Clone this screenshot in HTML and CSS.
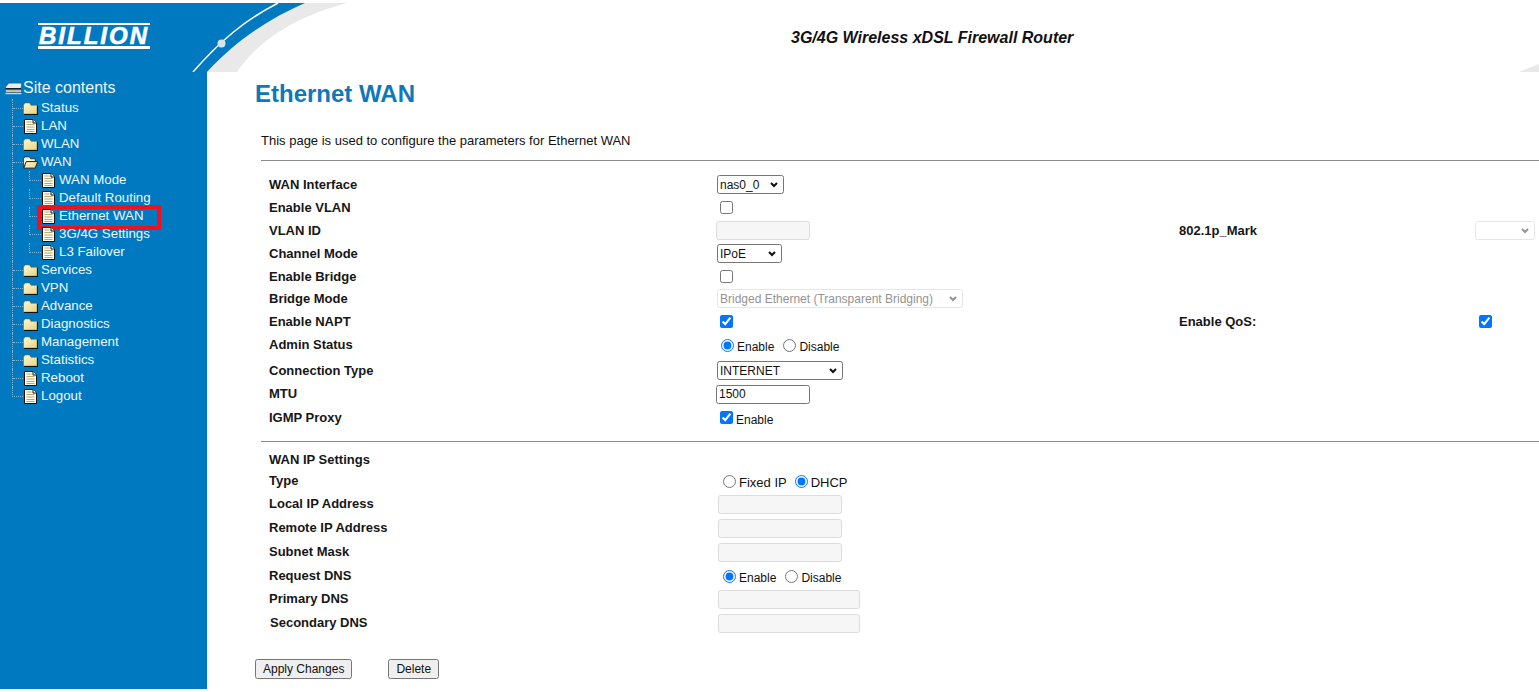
FILE: index.html
```html
<!DOCTYPE html>
<html lang="en">
<head>
<meta charset="utf-8">
<title>Ethernet WAN</title>
<link rel="stylesheet" href="styles.css">
</head>
<body>
<svg width="0" height="0" class="defs">
  <defs>
    <linearGradient id="fg" x1="0" y1="0" x2="1" y2="1"><stop offset="0" stop-color="#fff9d6"/><stop offset="1" stop-color="#e8d27e"/></linearGradient>
    <symbol id="folder" viewBox="0 0 16 14">
      <path d="M.5 3.500 2 1h5l1.500 2.500H15V13H.5z" fill="url(#fg)" stroke="#6f6230" stroke-width=".6"/>
      <path d="M1 13.300h14.700V4" fill="none" stroke="#111" stroke-width="1.100"/>
    </symbol>
    <symbol id="open" viewBox="0 0 16 14">
      <path d="M.5 3 2 1h5l1 2h5v3H4L.5 12.500z" fill="#fff9d6" stroke="#222" stroke-width=".8"/>
      <path d="M3.500 6H15.700L13 13H.8z" fill="url(#fg)" stroke="#111" stroke-width=".9"/>
    </symbol>
    <symbol id="doc" viewBox="0 0 13 15">
      <path d="M.5.500h8.500l3.500 3.500v10.500H.5z" fill="#fdfbe8" stroke="#111" stroke-width="1"/>
      <path d="M9 .5V4h3.500" fill="#fff" stroke="#111" stroke-width="1"/>
      <path d="M2.500 3h5M2.500 5.500h8M2.500 8h8M2.500 10.500h8M2.500 12.500h8" stroke="#b5a97c" stroke-width="1"/>
    </symbol>
    <symbol id="root" viewBox="0 0 18 13">
      <path d="M.5 5 4 .8h13.500v4.500L16 6.500H.5z" fill="#e6ecf0" stroke="#3a4a55" stroke-width=".7"/>
      <path d="M.5 6.700h16.500" stroke="#111c28" stroke-width="1.400"/>
      <path d="M.5 7.800h17v3H.5z" fill="#c3cace" stroke="#3a4a55" stroke-width=".6"/>
      <path d="M7 8.500h4v1.500H7z" fill="#e0b85a"/>
      <path d="M.5 12h17" stroke="#f4f8fa" stroke-width="1"/>
    </symbol>
  </defs>
</svg>
<div class="page">
  <header class="top">
    <div class="brand">
      <svg class="curve" viewBox="0 0 350 69" width="350" height="69" aria-hidden="true">
        <path d="M0 0H348C300 12 260 35 237 69H0z" fill="#e9e9e9"/>
        <path d="M0 0H305C270 15 235 38 207 69H0z" fill="#0079c1"/>
        <path d="M193 69C220 38 245 17 278 0" fill="none" stroke="#fff" stroke-width="1.500"/>
        <circle cx="221.500" cy="40.500" r="4" fill="#d6e2ee"/>
      </svg>
      <div class="logo">BILLION</div>
    </div>
    <div class="product">3G/4G Wireless xDSL Firewall Router</div>
    <svg class="corner" viewBox="0 0 20 9" width="20" height="9" aria-hidden="true"><path d="M0 9 20 1V9z" fill="#e9e9e9"/></svg>
  </header>
  <div class="body">
    <nav class="side">
      <div class="root"><svg class="ico-root"><use href="#root"/></svg>Site contents</div>
      <ul class="tree">
        <li><svg class="ico"><use href="#folder"/></svg>Status</li>
        <li><svg class="ico"><use href="#doc"/></svg>LAN</li>
        <li><svg class="ico"><use href="#folder"/></svg>WLAN</li>
        <li><svg class="ico"><use href="#open"/></svg>WAN</li>
        <li class="sub"><svg class="ico"><use href="#doc"/></svg>WAN Mode</li>
        <li class="sub"><svg class="ico"><use href="#doc"/></svg>Default Routing</li>
        <li class="sub marked"><svg class="ico"><use href="#doc"/></svg>Ethernet WAN</li>
        <li class="sub"><svg class="ico"><use href="#doc"/></svg>3G/4G Settings</li>
        <li class="sub"><svg class="ico"><use href="#doc"/></svg>L3 Failover</li>
        <li><svg class="ico"><use href="#folder"/></svg>Services</li>
        <li><svg class="ico"><use href="#folder"/></svg>VPN</li>
        <li><svg class="ico"><use href="#folder"/></svg>Advance</li>
        <li><svg class="ico"><use href="#folder"/></svg>Diagnostics</li>
        <li><svg class="ico"><use href="#folder"/></svg>Management</li>
        <li><svg class="ico"><use href="#folder"/></svg>Statistics</li>
        <li><svg class="ico"><use href="#doc"/></svg>Reboot</li>
        <li class="last"><svg class="ico"><use href="#doc"/></svg>Logout</li>
      </ul>
    </nav>
    <main class="main">
      <h1>Ethernet WAN</h1>
      <p class="intro">This page is used to configure the parameters for Ethernet WAN</p>
      <hr class="rule first">
      <div class="form upper">
        <div class="lab">WAN Interface</div>
        <div class="val wide"><select class="s-nas"><option>nas0_0</option></select></div>

        <div class="lab">Enable VLAN</div>
        <div class="val wide"><input type="checkbox" class="cb"></div>

        <div class="lab">VLAN ID</div>
        <div class="val"><input type="text" class="t-short" disabled></div>
        <div class="lab">802.1p_Mark</div>
        <div class="val"><select class="s-mark" disabled><option></option></select></div>

        <div class="lab">Channel Mode</div>
        <div class="val wide"><select class="s-ipoe"><option>IPoE</option></select></div>

        <div class="lab low">Enable Bridge</div>
        <div class="val wide"><input type="checkbox" class="cb"></div>

        <div class="lab">Bridge Mode</div>
        <div class="val wide"><select class="s-bridge" disabled><option>Bridged Ethernet (Transparent Bridging)</option></select></div>

        <div class="lab">Enable NAPT</div>
        <div class="val"><input type="checkbox" class="cb" checked></div>
        <div class="lab">Enable QoS:</div>
        <div class="val"><input type="checkbox" class="cb cb-qos" checked></div>

        <div class="lab high">Admin Status</div>
        <div class="val wide opts admin"><label><input type="radio" name="admin" checked>Enable</label><label><input type="radio" name="admin">Disable</label></div>

        <div class="lab">Connection Type</div>
        <div class="val wide"><select class="s-conn"><option>INTERNET</option></select></div>

        <div class="lab">MTU</div>
        <div class="val wide"><input type="text" class="t-short" value="1500"></div>

        <div class="lab">IGMP Proxy</div>
        <div class="val wide opts igmp"><label class="tight"><input type="checkbox" checked>Enable</label></div>
      </div>
      <hr class="rule second">
      <div class="form lower">
        <div class="lab">WAN IP Settings</div>
        <div class="val"></div>

        <div class="lab">Type</div>
        <div class="val opts big"><label><input type="radio" name="ip">Fixed IP</label><label><input type="radio" name="ip" checked>DHCP</label></div>

        <div class="lab">Local IP Address</div>
        <div class="val ind"><input type="text" class="t-mid" disabled></div>

        <div class="lab">Remote IP Address</div>
        <div class="val ind"><input type="text" class="t-mid" disabled></div>

        <div class="lab">Subnet Mask</div>
        <div class="val ind"><input type="text" class="t-mid" disabled></div>

        <div class="lab">Request DNS</div>
        <div class="val opts dns"><label><input type="radio" name="dns" checked>Enable</label><label><input type="radio" name="dns">Disable</label></div>

        <div class="lab">Primary DNS</div>
        <div class="val ind"><input type="text" class="t-long" disabled></div>

        <div class="lab nudge">Secondary DNS</div>
        <div class="val ind"><input type="text" class="t-long" disabled></div>
      </div>
      <div class="actions">
        <button type="button">Apply Changes</button>
        <button type="button">Delete</button>
      </div>
    </main>
  </div>
</div>
</body>
</html>
```
FILE: styles.css
```css
*, *::before, *::after { box-sizing: border-box; }
html, body { margin: 0; padding: 0; height: 100%; background: #fff; overflow: hidden; }
body { font-family: "Liberation Sans", Arial, sans-serif; color: #111; font-size: 12px; }
.defs { position: absolute; }
.page { padding-top: 3px; height: 689px; display: flex; flex-direction: column; }

.top { height: 69px; display: flex; position: relative; flex: none; }
.brand { width: 350px; flex: none; position: relative; }
.curve { position: absolute; left: 0; top: 0; }
.logo {
  position: absolute; left: 38px; top: 20px; width: 112px; height: 26px;
  border-top: 2px solid #fff; border-bottom: 3px solid #fff;
  color: #fff; font: italic bold 24px/21px "Liberation Sans", sans-serif;
  -webkit-text-stroke: .6px #fff;
  letter-spacing: 2px; text-align: center; white-space: nowrap;
}
.product {
  position: absolute; left: 791px; top: 26px;
  font: italic bold 16px/18px "Liberation Sans", sans-serif; color: #111; white-space: nowrap;
}
.corner { position: absolute; right: 0; bottom: 0; }

.body { display: flex; flex: 1; min-height: 0; }
.side { width: 207px; flex: none; background: #0079c1; color: #eef8ff; padding: 6px 0 0 5px; }
.root { display: flex; align-items: center; height: 20px; font-size: 16px; line-height: 20px; }
.ico-root { width: 17px; height: 13px; margin-right: 1px; }
.tree { list-style: none; margin: 1px 0 0 7px; padding: 0; width: fit-content; }
.tree li {
  height: 18px; display: flex; align-items: center; font-size: 13.300px; line-height: 18px;
  white-space: nowrap; position: relative; padding-left: 10px;
  border-left: 1px dotted #7fb6da;
}
.tree li::before {
  content: ""; position: absolute; left: 0; top: 9px; width: 10px;
  border-top: 1px dotted #7fb6da;
}
.tree li.last { border-left-color: transparent; }
.tree li.last::before {
  left: -1px; top: 0; width: 11px; height: 10px;
  border-top: 0; border-bottom: 1px dotted #7fb6da; border-left: 1px dotted #7fb6da;
}
.ico { width: 15px; height: 15px; margin-right: 3px; flex: none; position: relative; }
.tree li.sub { padding-left: 28px; }
.tree li.sub::before {
  left: 16px; top: 0; width: 12px; height: 10px;
  border-top: 0; border-bottom: 1px dotted #7fb6da; border-left: 1px dotted #7fb6da;
}
.marked::after {
  content: ""; position: absolute; left: 24px; top: -2px; width: 124px; height: 25px;
  border: 4px solid #f2101c; pointer-events: none;
}

.main { flex: 1; min-width: 0; padding-left: 48px; position: relative; }
h1 { margin: 7px 0 0; font-size: 24px; line-height: 30px; font-weight: bold; color: #0f78ba; }
.intro { margin: 24px 0 0 6px; font-size: 13px; line-height: 16px; color: #111; }
.rule { border: 0; border-top: 1px solid #8a8a8a; margin: 0 0 0 6px; }
.rule.first { margin-top: 11px; }
.rule.second { margin-top: 11px; }

.form { display: grid; margin-left: 14px; align-items: center; }
.upper {
  padding-top: 12px;
  grid-template-columns: 448px 462px 296px 1fr;
  grid-template-rows: 23px 23px 23px 23px 22px 23px 23px 26px 23px 24px 24px;
}
.lower {
  padding-top: 8px;
  grid-template-columns: 448px 1fr;
  grid-template-rows: 19px 23px 24px 24px 24px 23px 24px 24px;
}
.lab { font-size: 13px; font-weight: bold; white-space: nowrap; color: #161616; line-height: 16px; }
.low { padding-top: 2px; }
.high { padding-bottom: 2px; }
.nudge { padding-left: 1px; }
.val { display: flex; align-items: center; min-width: 0; font-size: 12px; }
.val.wide { grid-column: 2 / -1; }
.ind { padding-left: 2px; }

select, input[type=text] {
  font: 12px "Liberation Sans", sans-serif; height: 19px; margin: 0;
  border: 1px solid #767676; border-radius: 2.500px; color: #111;
}
select {
  appearance: none; -webkit-appearance: none; padding: 0 0 0 2px;
  background: #fff url("data:image/svg+xml,%3Csvg xmlns='http://www.w3.org/2000/svg' width='8' height='6'%3E%3Cpath d='M1 1l3 3 3-3' fill='none' stroke='%23111' stroke-width='2'/%3E%3C/svg%3E") no-repeat right 5px center;
}
input[type=text] { padding: 0 0 0 2px; margin-left: -1px; background: #fff; }
select:disabled, input:disabled { border-color: #dcdcdc; color: #666; }
input:disabled { background: #f6f6f6; }
select:disabled {
  background-image: url("data:image/svg+xml,%3Csvg xmlns='http://www.w3.org/2000/svg' width='8' height='6'%3E%3Cpath d='M1 1l3 3 3-3' fill='none' stroke='%23666' stroke-width='2'/%3E%3C/svg%3E");
}
.s-nas { width: 67px; }
.s-ipoe { width: 65px; }
.s-bridge { width: 246px; }
.s-conn { width: 126px; }
.s-mark { width: 60px; }
.t-short { width: 94px; height: 20px; }
.t-mid { width: 124px; height: 20px; }
.t-long { width: 142px; height: 20px; }
.cb { width: 13px; height: 13px; margin: 0 0 0 3px; }
.cb-qos { margin-left: 4px; }

.opts label { display: inline-flex; align-items: center; margin-right: 5px; }
.opts input { width: 13px; height: 13px; margin: 0 3px 2px 4px; }
.admin { padding-top: 1px; }
.igmp { padding-top: 3px; }
.opts label.tight input { margin: 0 3px 4px 3px; }
.big { padding: 3px 0 0 2px; font-size: 13px; }
.big label { margin-right: 4px; }
.dns { padding: 4px 0 0 2px; }

.actions { margin: 24px 0 0 0; display: flex; gap: 36px; }
button {
  font: 12px "Liberation Sans", sans-serif; height: 20px; padding: 0 7px; color: #111;
  border: 1px solid #767676; border-radius: 2.500px; background: #efefef;
}
```
